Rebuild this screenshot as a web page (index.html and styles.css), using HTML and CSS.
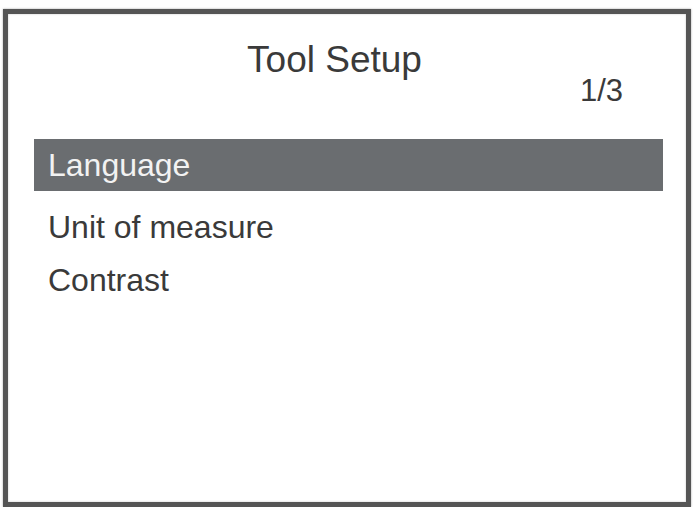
FILE: index.html
```html
<!DOCTYPE html>
<html>
<head>
<meta charset="utf-8">
<link rel="stylesheet" href="styles.css">
</head>
<body>
<div class="screen">
  <div class="header">
    <div class="title">Tool Setup</div>
    <div class="pager">1/3</div>
  </div>
  <ul class="menu">
    <li class="item selected">Language</li>
    <li class="item">Unit of measure</li>
    <li class="item">Contrast</li>
  </ul>
</div>
</body>
</html>
```
FILE: styles.css
```css
html, body {
  margin: 0;
  padding: 0;
  background: #ffffff;
}
body {
  width: 695px;
  height: 507px;
  overflow: hidden;
  font-family: "Liberation Sans", Arial, sans-serif;
  color: #3a3a3a;
}
.screen {
  box-sizing: border-box;
  margin: 9px 0 0 3px;
  width: 688px;
  height: 498px;
  border: 5px solid #555555;
  box-shadow: 0 0 2px rgba(0,0,0,0.35), inset 0 0 2px rgba(0,0,0,0.25);
  background: #ffffff;
}
.header {
  padding-top: 29px;
}
.title {
  font-size: 37px;
  line-height: 34px;
  text-align: center;
  padding-right: 25px;
}
.pager {
  font-size: 31px;
  line-height: 32px;
  text-align: right;
  padding-right: 63px;
  margin-top: -2px;
}
.menu {
  list-style: none;
  margin: 32px 23px 0 26px;
  padding: 0;
}
.item {
  font-size: 32px;
  line-height: 53px;
  padding-left: 14px;
}
.item.selected {
  line-height: 52px;
  background: #6a6d70;
  color: #f2f2f2;
  margin-bottom: 10px;
}
```
